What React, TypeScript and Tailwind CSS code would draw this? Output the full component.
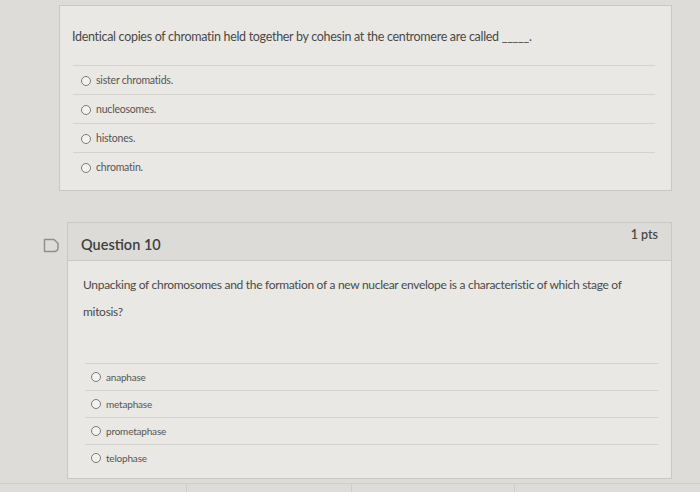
import React from "react";

const Radio = () => (
  <span className="inline-block w-[10px] h-[10px] rounded-full border border-[#7b7b7b] bg-[#f2f2f0] shrink-0" />
);

const Option = ({ label, size = "text-[11px]" }: { label: string; size?: string }) => (
  <div className="flex items-center gap-[5px] h-full">
    <Radio />
    <span className={`${size} text-[#555553] tracking-[-0.2px]`}>{label}</span>
  </div>
);

export default function App() {
  const font = { fontFamily: "Lato, 'Open Sans', sans-serif" };
  return (
    <div
      className="w-[700px] h-[492px] overflow-hidden bg-[#dddcd8] flex flex-col"
      style={font}
    >
      {/* top card */}
      <div className="shrink-0 ml-[59px] mt-[5px] w-[613px] h-[186px] border border-[#c9c8c4] bg-[#e9e8e5] flex flex-col">
        <div className="shrink-0 pl-[12px] pt-[22px] text-[12.5px] text-[#4a4a48] tracking-[-0.3px] h-[59px]">
          Identical copies of chromatin held together by cohesin at the centromere are called <span className="text-[#4a4a48]">_____.</span>
        </div>
        <div className="ml-[13px] mr-[16px] flex flex-col">
          {["sister chromatids.", "nucleosomes.", "histones.", "chromatin."].map((o) => (
            <div key={o} className="shrink-0 h-[29px] pl-[8px] pt-[2px] border-t border-[#d3d2ce]">
              <Option label={o} size="text-[10.5px]" />
            </div>
          ))}
        </div>
      </div>

      {/* question 10 */}
      <div className="shrink-0 flex mt-[31px]">
        <div className="w-[67px] pt-[16px] pl-[43px]">
          <svg width="17" height="15" viewBox="0 0 17 15" fill="none">
            <path d="M1.5 1.5 H11 L15 5.5 V9.5 Q15 13.5 11 13.5 H1.5 Z" stroke="#8f8f8d" strokeWidth="1.5" strokeLinejoin="round" />
          </svg>
        </div>
        <div className="w-[605px] h-[257px] border border-[#c9c8c4] bg-[#e9e8e5] flex flex-col">
          <div className="shrink-0 h-[38px] bg-[#dcdbd8] border-b border-[#c9c8c4] flex justify-between px-[13px]">
            <span className="mt-[11px] text-[14.5px] font-semibold text-[#3f3f3e]">Question 10</span>
            <span className="mt-[3px] text-[12.5px] font-semibold text-[#4a4a48]">1 pts</span>
          </div>
          <div className="shrink-0 pl-[15px] pt-[10px] pr-[30px] text-[12px] leading-[27px] text-[#4a4a48] tracking-[-0.3px] h-[102px]">
            Unpacking of chromosomes and the formation of a new nuclear envelope is a characteristic of which stage of mitosis?
          </div>
          <div className="ml-[17px] mr-[13px] flex flex-col">
            {["anaphase", "metaphase", "prometaphase", "telophase"].map((o) => (
              <div key={o} className="shrink-0 h-[27px] pl-[6px] border-t border-[#d3d2ce]">
                <Option label={o} size="text-[10px]" />
              </div>
            ))}
          </div>
        </div>
      </div>
      {/* bottom bar */}
      <div className="shrink-0 flex mt-[4px] h-[20px] border-t border-[#d0cfcb]">
        <div className="w-[187px] border-r border-[#cfcecb]" />
        <div className="w-[165px] border-r border-[#cfcecb]" />
        <div className="w-[163px] border-r border-[#cfcecb]" />
      </div>
    </div>
  );
}
